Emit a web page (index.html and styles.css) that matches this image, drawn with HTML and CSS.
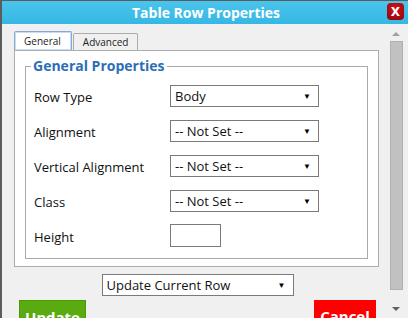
FILE: index.html
```html
<!DOCTYPE html>
<html lang="en">
<head>
    <meta charset="UTF-8">
    <meta name="viewport" content="width=device-width, initial-scale=1.0">
    <title>Table Row Properties</title>

    <link rel="stylesheet" href="styles.css">
</head>
<body>
    <div class="dialog">
        <div class="titlebar">
            <span class="title">Table Row Properties</span>
            <span class="close">X</span>
        </div>

        <div class="dialog-body">
            <div class="content">
                <!-- abas -->
                <div class="tabs">
                    <span class="tab active">General</span>
                    <span class="tab">Advanced</span>
                </div>

                <div class="tab-panel">
                    <div class="fieldset">
                        <div class="legend">General Properties</div>

                        <div class="form-row">
                            <label>Row Type</label>
                            <div class="select">Body<span class="arrow">&#9660;</span></div>
                        </div>
                        <div class="form-row">
                            <label>Alignment</label>
                            <div class="select">-- Not Set --<span class="arrow">&#9660;</span></div>
                        </div>
                        <div class="form-row">
                            <label>Vertical Alignment</label>
                            <div class="select">-- Not Set --<span class="arrow">&#9660;</span></div>
                        </div>
                        <div class="form-row">
                            <label>Class</label>
                            <div class="select">-- Not Set --<span class="arrow">&#9660;</span></div>
                        </div>
                        <div class="form-row">
                            <label>Height</label>
                            <div class="input"></div>
                        </div>
                    </div>
                </div>

                <div class="apply-row">
                    <div class="select wide">Update Current Row<span class="arrow">&#9660;</span></div>
                </div>

                <div class="buttons">
                    <button class="btn-update">Update</button>
                    <button class="btn-cancel">Cancel</button>
                </div>
            </div>

            <div class="scrollbar">
                <span class="scroll-up"></span>
                <div class="thumb"></div>
                <span class="scroll-down"></span>
            </div>
        </div>
    </div>
</body>
</html>
```

FILE: styles.css
```css
body {
    margin: 0;
    font-family: "Open Sans", Arial, sans-serif;
    background-color: #f0f0f0;
    overflow: hidden;
}

.dialog {
    width: 408px;
    height: 318px;
    box-sizing: border-box;
    border-left: 2px solid #5c5c5c;
    border-top: 1px solid #5c5c5c;
    background-color: #f0f0f0;
    overflow: hidden;
}

.titlebar {
    position: relative;
    height: 23px;
    background: linear-gradient(#4ac4ec, #36b8e4);
    display: flex;
    align-items: center;
    justify-content: center;
}

.title {
    color: white;
    font-weight: bold;
    font-size: 14px;
    margin-left: 2px;
}

.close {
    position: absolute;
    right: 4px;
    top: 2px;
    width: 17px;
    height: 17px;
    border-radius: 4px;
    background: radial-gradient(circle at 50% 35%, #d2141b, #8e0508);
    color: white;
    font-weight: bold;
    font-size: 12px;
    font-family: "DejaVu Sans", sans-serif;
    display: flex;
    align-items: center;
    justify-content: center;
}

.dialog-body {
    display: flex;
}

.content {
    width: 370px;
    padding-left: 12px;
}

/* abas */
.tabs {
    display: flex;
    align-items: flex-end;
    height: 26px;
}

.tab {
    font-size: 10px;
    color: #222;
    border: 1px solid #acacac;
    border-bottom: none;
    background-color: #f0f0f0;
    height: 16px;
    line-height: 16px;
    padding: 0 9px;
    margin-right: 2px;
    border-radius: 2px 2px 0 0;
}

.tab.active {
    background-color: white;
    border-color: #86a8d6;
    box-shadow: inset 0 0 0 1px #c8dcf4;
    height: 18px;
    line-height: 19px;
    padding: 0 10px 0 9px;
    margin-right: 1px;
}

.tab-panel {
    width: 365px;
    height: 217px;
    border: 1px solid #acacac;
    background-color: white;
    padding: 15px 10px 0 10px;
    box-sizing: border-box;
}

.fieldset {
    position: relative;
    border: 1px solid #a9a9a9;
    height: 193px;
    padding: 11px 0 0 8px;
    box-sizing: border-box;
}

.legend {
    position: absolute;
    left: 5px;
    top: -10px;
    background: white;
    padding: 0 2px;
    color: #2e6db5;
    font-weight: bold;
    font-size: 14px;
    line-height: 18px;
}

.form-row {
    display: flex;
    align-items: center;
    height: 35px;
}

.form-row label {
    width: 136px;
    font-size: 13px;
    color: #111;
    margin-top: 3px;
}

.select {
    position: relative;
    width: 149px;
    height: 22px;
    box-sizing: border-box;
    border: 1px solid #7a7a7a;
    background-color: white;
    font-size: 13px;
    line-height: 20px;
    padding-left: 4px;
    color: #111;
}

.arrow {
    position: absolute;
    right: 7px;
    top: 0;
    font-size: 8px;
    color: #000;
}

.input {
    width: 51px;
    height: 23px;
    box-sizing: border-box;
    border: 1px solid #7a7a7a;
    background-color: white;
}

.apply-row {
    display: flex;
    justify-content: center;
    width: 367px;
    margin-top: 7px;
}

.select.wide {
    width: 192px;
}

.buttons {
    display: flex;
    justify-content: space-between;
    align-items: flex-start;
    width: 357px;
    margin: 4px 0 0 5px;
}

button {
    border: none;
    color: white;
    font-weight: bold;
    font-size: 15px;
    font-family: "Open Sans", Arial, sans-serif;
    height: 30px;
    padding: 0;
    line-height: 32px;
    cursor: pointer;
}

.btn-update {
    width: 67px;
    background-color: #5aab0f;
    border: 1px solid #4a9a08;
}

.btn-cancel {
    width: 62px;
    background-color: #ff0000;
}

.scrollbar {
    width: 24px;
    display: flex;
    flex-direction: column;
    align-items: center;
    padding-left: 2px;
}

.scroll-up {
    margin-top: 8px;
    width: 0;
    height: 0;
    border-left: 4px solid transparent;
    border-right: 4px solid transparent;
    border-bottom: 4px solid #a0a0a0;
}

.thumb {
    margin-top: 5px;
    width: 13px;
    height: 249px;
    box-sizing: border-box;
    background-color: #c1c1c1;
    border: 1px solid #b0b0b0;
}

.scroll-down {
    margin-top: 17px;
    width: 0;
    height: 0;
    border-left: 4px solid transparent;
    border-right: 4px solid transparent;
    border-top: 4px solid #606060;
}
```
